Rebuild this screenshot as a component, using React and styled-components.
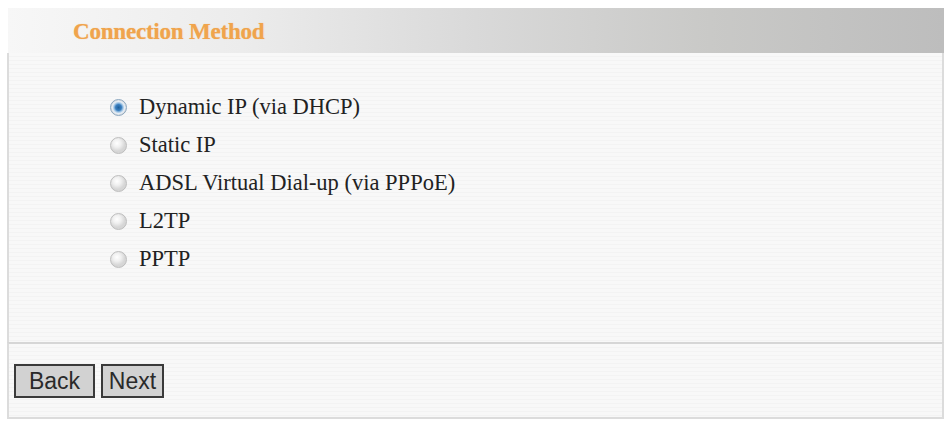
import React, { useState } from "react";
import styled, { createGlobalStyle } from "styled-components";

const Global = createGlobalStyle`
  html, body { margin: 0; padding: 0; background: #ffffff; }
  body { font-family: "Liberation Serif", "Times New Roman", serif; }
`;

const Frame = styled.div`
  margin: 8px 4px 0 7px;
  width: 937px;
  display: flex;
  flex-direction: column;
`;

const Header = styled.div`
  height: 45px;
  margin-left: 1px;
  display: flex;
  align-items: center;
  padding: 2px 0 0 65px;
  box-sizing: border-box;
  background: linear-gradient(to right, #f7f7f7 0%, #ececec 25%, #d9d9d9 50%, #c9c9c7 75%, #bdbdbd 100%);
`;

const Title = styled.h1`
  margin: 0;
  font-family: "Liberation Serif", "Times New Roman", serif;
  font-weight: bold;
  font-size: 23px;
  letter-spacing: -0.2px;
  color: #f0a44c;
  text-shadow: 0 0 1px rgba(240, 164, 76, 0.6);
`;

const Panel = styled.div`
  height: 289px;
  box-sizing: border-box;
  border-left: 2px solid #dcdcdc;
  border-right: 2px solid #dcdcdc;
  background: repeating-linear-gradient(to bottom, #f8f8f8 0px, #f8f8f8 3px, #f3f3f3 3px, #f3f3f3 4px);
  padding: 35px 0 0 101px;
`;

const Options = styled.div`
  display: flex;
  flex-direction: column;
`;

const Option = styled.label`
  display: flex;
  align-items: center;
  height: 38px;
  font-family: "Liberation Serif", "Times New Roman", serif;
  font-size: 22.5px;
  color: #222;
  cursor: pointer;
`;

const Dot = styled.span`
  width: 17px;
  height: 17px;
  border-radius: 50%;
  box-sizing: border-box;
  margin-right: 12px;
  border: 1px solid ${(p) => (p.$checked ? "#8aa6bf" : "#bdbdbd")};
  background: ${(p) =>
    p.$checked
      ? "radial-gradient(circle at 50% 50%, #1f5f9a 0px, #3b80c0 3px, #9cc2e3 4.5px, #e6eef6 6px, #d8d8d8 8px)"
      : "radial-gradient(circle at 40% 35%, #ffffff 0px, #f0f0f0 4px, #d6d6d6 8px)"};
  flex: none;
`;

const Footer = styled.div`
  height: 77px;
  box-sizing: border-box;
  border-top: 2px solid #d6d6d6;
  border-left: 2px solid #dcdcdc;
  border-right: 2px solid #dcdcdc;
  border-bottom: 2px solid #dcdcdc;
  background: repeating-linear-gradient(to bottom, #f8f8f8 0px, #f8f8f8 3px, #f3f3f3 3px, #f3f3f3 4px);
  display: flex;
  align-items: flex-start;
  gap: 6px;
  padding: 20px 0 0 5px;
`;

const Button = styled.button`
  height: 34px;
  width: ${(p) => p.$w}px;
  box-sizing: border-box;
  border: 2px solid #3a3a3a;
  background: #d2d2d2;
  font-family: "Liberation Sans", Arial, sans-serif;
  font-size: 23px;
  color: #2a2a2a;
  padding: 0;
  text-align: center;
  cursor: pointer;
`;

const options = [
  "Dynamic IP (via DHCP)",
  "Static IP",
  "ADSL Virtual Dial-up (via PPPoE)",
  "L2TP",
  "PPTP",
];

export default function App() {
  const [sel, setSel] = useState(0);
  return (
    <>
      <Global />
      <Frame>
        <Header>
          <Title>Connection Method</Title>
        </Header>
        <Panel>
          <Options>
            {options.map((o, i) => (
              <Option key={o} onClick={() => setSel(i)}>
                <Dot $checked={sel === i} />
                {o}
              </Option>
            ))}
          </Options>
        </Panel>
        <Footer>
          <Button $w={81}>Back</Button>
          <Button $w={63}>Next</Button>
        </Footer>
      </Frame>
    </>
  );
}
